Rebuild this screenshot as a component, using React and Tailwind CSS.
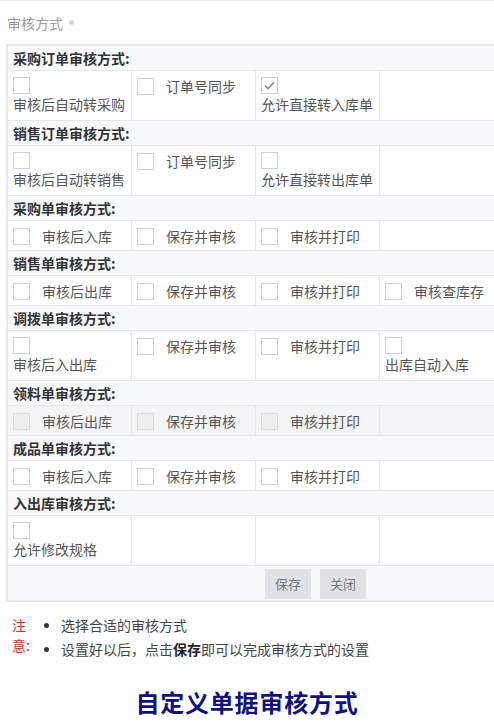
import React from "react";

function Box({ checked, disabled }) {
  return (
    <span
      className={
        "flex w-[17px] h-[17px] shrink-0 items-center justify-center border " +
        (disabled ? "border-[#dcdcdc] bg-[#efefef]" : "border-[#cfcfcf] bg-white")
      }
    >
      {checked && (
        <svg width="11" height="9" viewBox="0 0 11 9">
          <path d="M1 4.5 L4 7.5 L10 1.5" fill="none" stroke="#888" strokeWidth="1.6" />
        </svg>
      )}
    </span>
  );
}

function Cell({ c, disabled, last }) {
  const base =
    "w-[124px] shrink-0 px-[5px] text-[14px] text-[#555] " +
    (last ? "" : "border-r border-[#e3e7eb] ");
  if (!c) return <div className={base} />;
  if (c.type === "stack") {
    return (
      <div className={base + "pt-[6px]"}>
        <Box checked={c.checked} disabled={disabled} />
        <div className="leading-[20px] whitespace-nowrap">{c.label}</div>
      </div>
    );
  }
  return (
    <div className={base + "pt-[5px]"}>
      <div className="flex items-center gap-[12px]">
        <Box checked={c.checked} disabled={disabled} />
        <span className="leading-[20px] whitespace-nowrap">{c.label}</span>
      </div>
    </div>
  );
}

const S = (label, checked) => ({ type: "stack", label, checked });
const I = (label) => ({ type: "inline", label });

const sections = [
  { title: "采购订单审核方式:", h: "h-[50px]", cells: [S("审核后自动转采购"), I("订单号同步"), S("允许直接转入库单", true), null] },
  { title: "销售订单审核方式:", h: "h-[50px]", cells: [S("审核后自动转销售"), I("订单号同步"), S("允许直接转出库单"), null] },
  { title: "采购单审核方式:", h: "h-[30px]", cells: [I("审核后入库"), I("保存并审核"), I("审核并打印"), null] },
  { title: "销售单审核方式:", h: "h-[30px]", cells: [I("审核后出库"), I("保存并审核"), I("审核并打印"), I("审核查库存")] },
  { title: "调拨单审核方式:", h: "h-[50px]", cells: [S("审核后入出库"), I("保存并审核"), I("审核并打印"), S("出库自动入库")] },
  { title: "领料单审核方式:", h: "h-[30px]", gray: true, cells: [I("审核后出库"), I("保存并审核"), I("审核并打印"), null] },
  { title: "成品单审核方式:", h: "h-[30px]", cells: [I("审核后入库"), I("保存并审核"), I("审核并打印"), null] },
  { title: "入出库审核方式:", h: "h-[50px]", cells: [S("允许修改规格"), null, null, null] },
];

export default function App() {
  return (
    <div
      className="w-[494px] h-[725px] overflow-hidden bg-white"
      style={{ fontFamily: '"Noto Sans CJK SC", "Noto Sans", sans-serif' }}
    >
      <div className="border-t border-[#ececec] h-[44px] flex items-center pl-[7px]">
        <span className="text-[14px] text-[#999] leading-[20px]">审核方式</span>
        <span className="ml-[6px] w-[5px] h-[5px] rounded-full bg-[#d6d6d6]" />
      </div>

      <div className="ml-[6px] w-[640px] border-2 border-[#e5e9ed]">
        {sections.map((s, i) => (
          <div key={i}>
            <div className="h-[25px] border-b border-[#e3e7eb] bg-[#f8f9fb] pl-[5px] text-[14px] font-bold leading-[24px] text-[#333]">
              {s.title}
            </div>
            <div className={"flex border-b border-[#e3e7eb] " + s.h + (s.gray ? " bg-[#f3f4f6]" : " bg-white")}>
              {s.cells.map((c, j) => (
                <Cell key={j} c={c} disabled={s.gray} last={j === 3} />
              ))}
            </div>
          </div>
        ))}
        <div className="h-[34px] bg-[#f8f9fb] pl-[257px] pt-[3px] flex gap-[9px]">
          <button className="w-[46px] h-[30px] bg-[#dfe3e8] text-[13px] text-[#777]">保存</button>
          <button className="w-[46px] h-[30px] bg-[#dfe3e8] text-[13px] text-[#777]">关闭</button>
        </div>
      </div>

      <div className="flex mt-[13px] pl-[12px]">
        <div className="w-[20px] text-[14px] leading-[20px] text-[#f02020]">
          注<br />意:
        </div>
        <div className="ml-[12px] -mt-[2px] text-[14px] text-[#444]">
          <div className="flex items-center h-[24px]">
            <span className="w-[5px] h-[5px] rounded-full bg-[#333]" />
            <span className="ml-[12px]">选择合适的审核方式</span>
          </div>
          <div className="flex items-center h-[24px]">
            <span className="w-[5px] h-[5px] rounded-full bg-[#333]" />
            <span className="ml-[12px]">
              设置好以后，点击<b className="text-[#222]">保存</b>即可以完成审核方式的设置
            </span>
          </div>
        </div>
      </div>

      <div className="mt-[25px] text-center text-[24px] font-bold leading-[32px] tracking-[0.8px] text-[#101080]">
        自定义单据审核方式
      </div>
    </div>
  );
}
